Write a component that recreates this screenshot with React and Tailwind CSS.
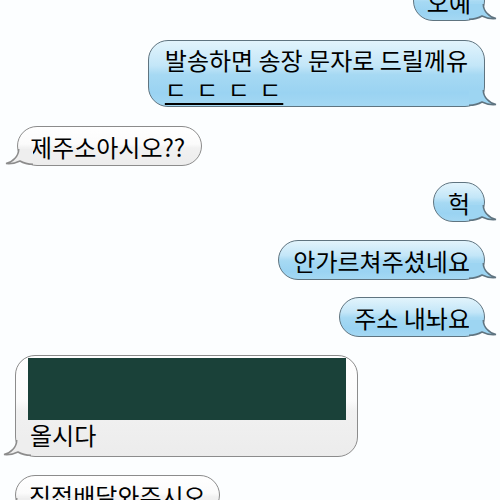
const font = { fontFamily: '"Noto Sans CJK KR", "Noto Sans", sans-serif' };

function Tail({ side }) {
  const mine = side === 'right';
  const fill = mine ? '#9dd5f2' : '#eeeeee';
  const stroke = mine ? '#5f7480' : '#8c8c8c';
  return (
    <svg
      width="28"
      height="24"
      viewBox="0 0 28 24"
      className={
        mine
          ? 'absolute bottom-0 right-[-13px]'
          : 'absolute bottom-0 left-[-13px] -scale-x-100'
      }
    >
      <path
        d="M14.25 8 C14.25 15 20 21 27 22.5 C22 23 17 22 13 20 C9 22.5 5 23.25 0 23.25 L0 8 Z"
        fill={fill}
      />
      <path
        d="M14.25 8 C14.25 15 20 21 27 22.5 C22 23 17 22 13 20 C9 22.5 5 23.25 0 23.25"
        fill="none"
        stroke={stroke}
        strokeWidth="1.5"
      />
    </svg>
  );
}

function Bubble({ side, className = '', children }) {
  const mine = side === 'right';
  return (
    <div
      className={
        (mine
          ? 'self-end border-[#5f7480] bg-[linear-gradient(#e2f4fc_0%,#c3e6f8_38%,#a6d9f3_52%,#9ad3f2_80%,#a4d8f3_100%)] '
          : 'self-start border-[#8c8c8c] bg-[linear-gradient(#ffffff_0%,#fbfbfb_45%,#f1f1f1_55%,#ececec_100%)] ') +
        'relative rounded-[20px] border-[1.5px] text-[24px] leading-[29px] text-black ' +
        className
      }
    >
      {children}
      <Tail side={side} />
    </div>
  );
}

export default function App() {
  return (
    <div className="h-[500px] w-[500px] overflow-hidden bg-[#fcfeff]" style={font}>
      <div className="flex flex-col pl-[17px] pr-[15px]">
        <Bubble side="right" className="mt-[-19px] px-[13px] py-[4.5px]">오예</Bubble>

        <Bubble side="right" className="mt-[19px] pl-[16px] pr-[16px] pt-[4px] pb-[3px]">
          <div>발송하면 송장 문자로 드릴께유</div>
          <div className="tracking-[2px]">
            <span className="underline decoration-2 underline-offset-[4px]">ㄷ ㄷ ㄷ ㄷ</span>
          </div>
        </Bubble>

        <Bubble side="left" className="mt-[19px] pl-[12px] pr-[16px] py-[4.5px]">제주소아시오??</Bubble>

        <Bubble side="right" className="mt-[16px] px-[14px] py-[4.5px]">헉</Bubble>

        <Bubble side="right" className="mt-[18px] px-[14px] py-[4.5px]">안가르쳐주셨네요</Bubble>

        <Bubble side="right" className="mt-[17px] px-[14px] py-[4.5px]">주소 내놔요</Bubble>

        <Bubble side="left" className="mt-[18px] w-[343px] ml-[-2px] pl-[12px] pr-[11px] pt-[2px] pb-[7px]">
          <div className="h-[62px] w-full bg-[#1a4139]" />
          <div className="pl-[2px]">올시다</div>
        </Bubble>

        <Bubble side="left" className="mt-[18px] ml-[-2px] px-[13px] py-[4.5px]">직접배달와주시오</Bubble>
      </div>
    </div>
  );
}
